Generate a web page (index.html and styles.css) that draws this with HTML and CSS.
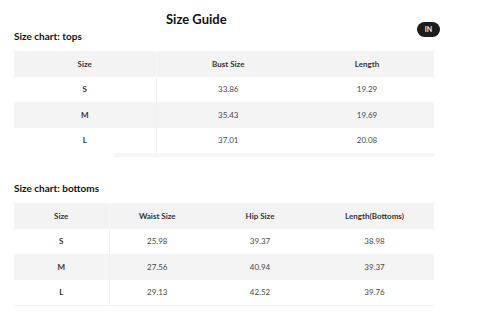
FILE: index.html
```html
<!DOCTYPE html>
<html>
<head>
<meta charset="utf-8">
<link rel="stylesheet" href="styles.css">
</head>
<body>
<div class="page">
  <div class="top">
    <h1 class="title">Size Guide</h1>
    <h2 class="heading first">Size chart: tops</h2>
    <span class="unit">IN</span>
  </div>
  <div class="table-wrap tops">
    <table class="chart">
      <colgroup><col style="width:142px"><col style="width:144px"><col style="width:134px"></colgroup>
      <thead><tr><th>Size</th><th>Bust Size</th><th>Length</th></tr></thead>
      <tbody>
        <tr><td class="sz">S</td><td>33.86</td><td>19.29</td></tr>
        <tr><td class="sz">M</td><td>35.43</td><td>19.69</td></tr>
        <tr><td class="sz">L</td><td>37.01</td><td>20.08</td></tr>
      </tbody>
    </table>
    <div class="scroll"><div class="thumb"></div></div>
  </div>
  <h2 class="heading second">Size chart: bottoms</h2>
  <div class="table-wrap bottoms">
    <table class="chart">
      <colgroup><col style="width:95px"><col style="width:96px"><col style="width:110px"><col style="width:119px"></colgroup>
      <thead><tr><th>Size</th><th>Waist Size</th><th>Hip Size</th><th>Length(Bottoms)</th></tr></thead>
      <tbody>
        <tr><td class="sz">S</td><td>25.98</td><td>39.37</td><td>38.98</td></tr>
        <tr><td class="sz">M</td><td>27.56</td><td>40.94</td><td>39.37</td></tr>
        <tr><td class="sz">L</td><td>29.13</td><td>42.52</td><td>39.76</td></tr>
      </tbody>
    </table>
  </div>
</div>
</body>
</html>
```

FILE: styles.css
```css
* { box-sizing: border-box; }
html, body { margin: 0; padding: 0; background: #fff; }
body { font-family: Lato, "Noto Sans", sans-serif; color: #222; }
.page { width: 480px; padding: 0 46px 0 14px; }
.top {
  display: grid;
  grid-template-columns: 1fr auto;
  padding-top: 12px;
}
.title {
  grid-column: 1; grid-row: 1;
  margin: 0; padding-left: 152px;
  font-size: 13px; line-height: 15px; font-weight: 700; color: #111;
}
.heading {
  margin: 0; font-size: 10px; line-height: 12px; font-weight: 700; color: #111;
}
.heading.first { grid-column: 1; grid-row: 2; margin-top: 3px; }
.heading.second { margin-top: 25px; }
.unit {
  grid-column: 2; grid-row: 1 / 3;
  align-self: start;
  margin-top: 10px; margin-right: -6px;
  width: 23px; height: 15px; border-radius: 8px;
  background: #1c1c1c; color: #eee;
  font-size: 7px; font-weight: 700; line-height: 15px; text-align: center;
}
.table-wrap { width: 420px; }
.tops { margin-top: 9px; }
.bottoms { margin-top: 9px; border-bottom: 1px solid #f3f3f3; }
.chart {
  width: 420px; border-collapse: collapse; table-layout: fixed;
  font-size: 8px; text-align: center;
}
.chart th, .chart td { height: 25.5px; padding: 0; vertical-align: middle; }
.chart th { background: #f3f3f3; font-weight: 700; color: #333; }
.chart td { color: #4a4a4a; }
.chart td.sz { font-weight: 700; color: #333; }
.chart tbody tr:nth-child(2) td { background: #f4f4f4; }
.chart th:first-child { border-right: 1px solid #f8f8f8; }
.chart td:first-child { border-right: 1px solid #f0f0f0; }
.scroll { height: 4px; display: flex; justify-content: flex-end; }
.thumb { width: 321px; height: 4px; background: #f6f6f6; }
```
